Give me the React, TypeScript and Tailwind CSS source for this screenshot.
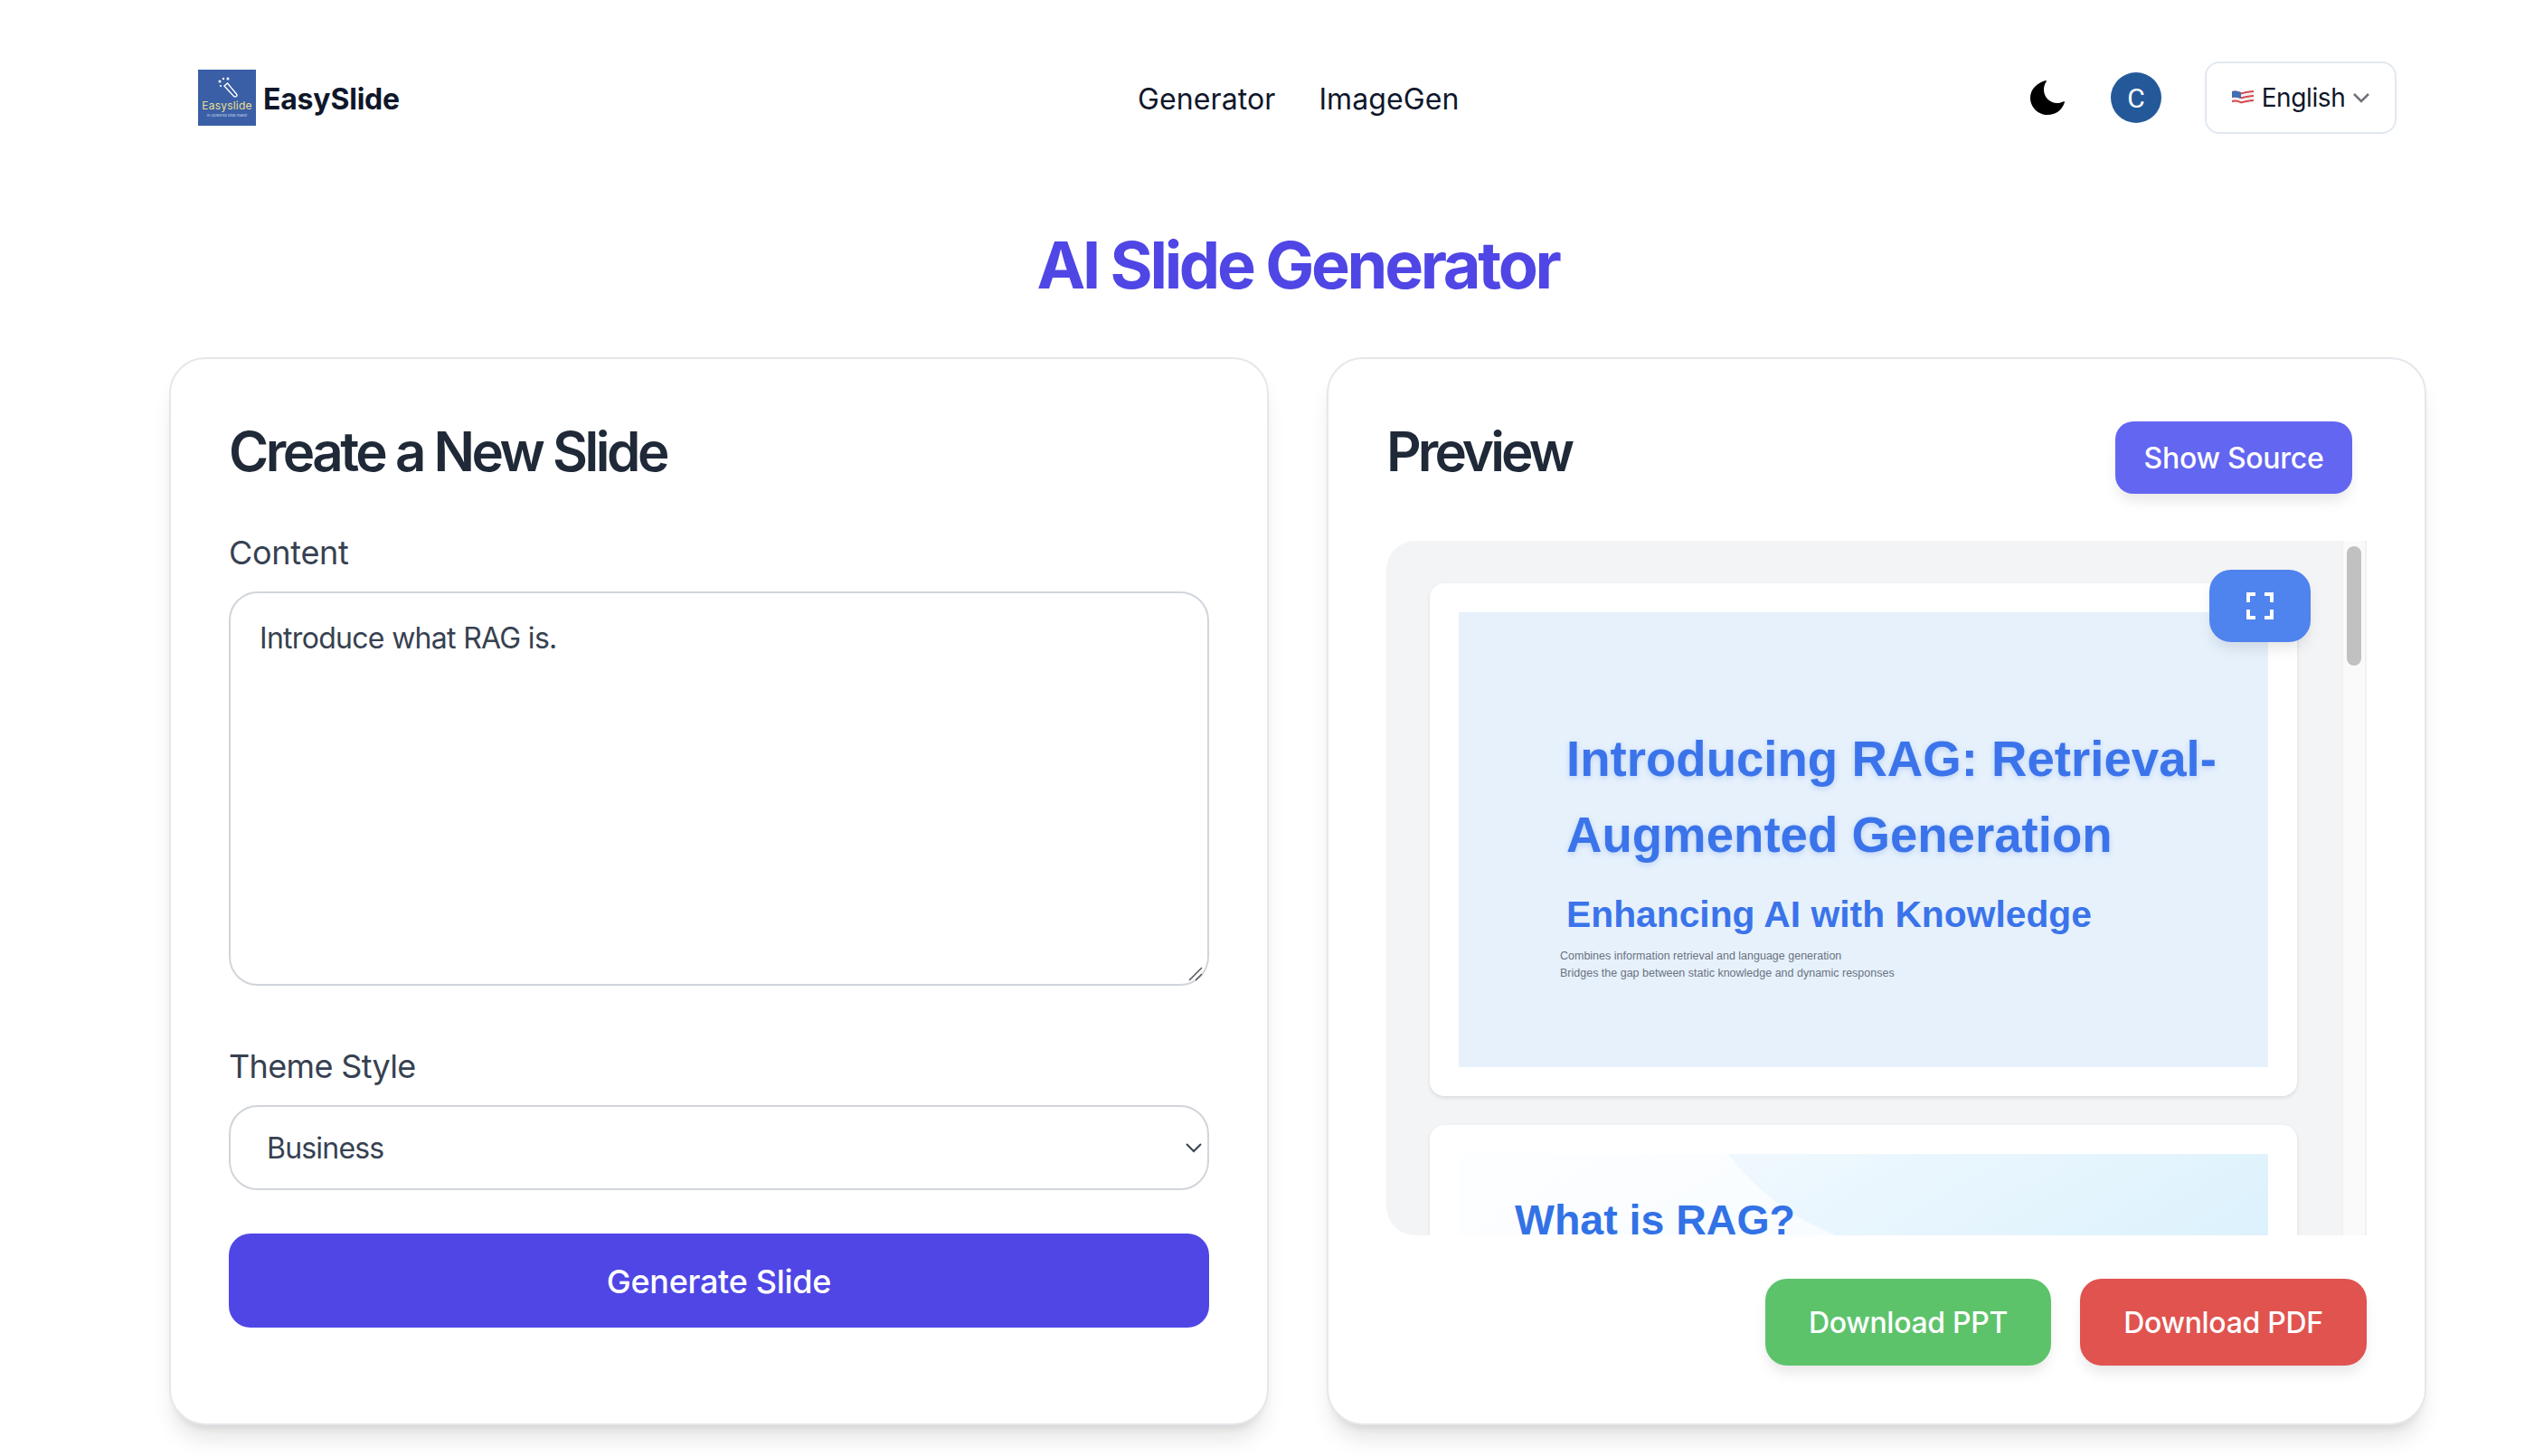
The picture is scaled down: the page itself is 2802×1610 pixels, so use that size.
import React from "react";

const inter = { fontFamily: "Inter, sans-serif" };

function Logo() {
  return (
    <div className="relative flex h-[62px] w-[64px] flex-col items-center overflow-hidden bg-[#3a5fa6]">
      <svg width="64" height="33" viewBox="0 0 64 33" fill="none" className="shrink-0">
        <path d="M29 18l3.500-3 10 12c1.500 2-1 4-3 2.500z" stroke="#fff" strokeWidth="1.400" />
        <circle cx="24" cy="13" r="1.500" fill="#fff" />
        <circle cx="28" cy="10" r="1.200" fill="#fff" />
        <circle cx="33" cy="10" r="1.500" fill="#fff" />
        <circle cx="25" cy="18" r="1.100" fill="#fff" />
      </svg>
      <span className="text-[12px] leading-[14px] tracking-[0.2px] text-[#eadf8c]" style={inter}>Easyslide</span>
      <span className="mt-[1px] whitespace-nowrap text-[4px] leading-[6px] text-[#c8d4ea]" style={inter}>AI-powered slide maker</span>
    </div>
  );
}

function Flag() {
  return (
    <svg width="26" height="20" viewBox="0 0 26 20">
      <path d="M1 3c6-2 9 2 12 1s8-2 12-2v13c-4 0-9 1-12 2s-6-3-12-1z" fill="#f2f2f2" />
      <path d="M1 3c6-2 9 2 12 1s8-2 12-2v2c-4 0-9 1-12 2S7 3 1 5zM1 8c6-2 9 2 12 1s8-2 12-2v2c-4 0-9 1-12 2S7 8 1 10zM1 13c6-2 9 2 12 1s8-2 12-2v2c-4 0-9 1-12 2s-6-3-12-1z" fill="#d9484c" />
      <path d="M1 3c4-1.400 7 .2 10 1v7c-3-.8-6-2-10-1z" fill="#3f6fb5" />
    </svg>
  );
}

function Header() {
  return (
    <header className="flex h-[216px] items-center pl-[219px] pr-[152px]">
      <div className="flex w-[1039px] items-center gap-[8px]">
        <Logo />
        <span className="pt-[3px] text-[32px] font-bold tracking-[-0.2px] text-[#0f172a]" style={inter}>EasySlide</span>
      </div>
      <nav className="flex gap-[48px] pt-[3px] text-[32px] tracking-[0.1px] text-[#0f172a]" style={inter}>
        <span>Generator</span>
        <span>ImageGen</span>
      </nav>
      <div className="ml-auto flex items-center">
        <svg width="40" height="40" viewBox="0 0 40 40" className="mr-[50px]">
          <path d="M17 1C9 3 0 10 0 20c0 11 9 19 19 19 9 0 16-5 19-14 .3-.8 0-1-.8-.8C35 25 32 26 30 26 21 26 15 19 15 11c0-3 .8-6 2.800-9 .2-.7-.2-1.200-.8-1z" fill="#000" transform="translate(1 0)" />
        </svg>
        <div className="mr-[48px] flex h-[56px] w-[56px] items-center justify-center rounded-full bg-[#245999] text-[30px] text-white" style={{ fontFamily: "Roboto, sans-serif" }}>C</div>
        <div className="flex h-[80px] w-[212px] items-center justify-center gap-[8px] rounded-[16px] border-2 border-[#e2e8f0] text-[28px] tracking-[-0.4px] text-[#0f172a]" style={inter}>
          <Flag />
          <span>English</span>
          <svg width="20" height="12" viewBox="0 0 20 12" fill="none"><path d="M2 2l8 8 8-8" stroke="#71717a" strokeWidth="2.500" /></svg>
        </div>
      </div>
    </header>
  );
}

function Card({ children }: { children: React.ReactNode }) {
  return (
    <section className="h-[1181px] w-[1216px] rounded-[40px] border-2 border-[#e5e7eb] bg-white px-[64px] pt-[66px] shadow-[0_20px_25px_-5px_rgba(0,0,0,0.1),0_8px_10px_-6px_rgba(0,0,0,0.1)]">
      {children}
    </section>
  );
}

function Slide1() {
  return (
    <div className="h-[503px] w-[895px] bg-[#e6f1fc] pl-[119px] pt-[121px]" style={{ fontFamily: '"Liberation Sans", sans-serif' }}>
      <h3 className="w-[760px] text-[54.600px] font-bold leading-[84px] text-[#3b74ea] [text-shadow:0_2px_6px_rgba(59,115,232,0.25)]">Introducing RAG: Retrieval-Augmented Generation</h3>
      <h4 className="mt-[20px] text-[40.800px] font-bold leading-[50px] text-[#3b74ea]">Enhancing AI with Knowledge</h4>
      <div className="-ml-[7px] mt-[12px] text-[12.500px] leading-[19px] text-[#6b7280]">
        <p>Combines information retrieval and language generation</p>
        <p>Bridges the gap between static knowledge and dynamic responses</p>
      </div>
    </div>
  );
}

function Slide2() {
  return (
    <div className="relative h-[503px] w-[895px] overflow-hidden bg-gradient-to-br from-[#f8fbff] to-[#c8ebfb] pl-[62px] pt-[43px]" style={{ fontFamily: '"Liberation Sans", sans-serif' }}>
      <svg className="absolute left-0 top-0" width="895" height="503" viewBox="0 0 895 503">
        <path d="M0 0h298c30 40 70 70 117 89C380 200 200 300 0 300z" fill="#fff" fillOpacity="0.7" />
      </svg>
      <h3 className="relative text-[46.500px] font-bold leading-[60px] text-[#3272e6]">What is RAG?</h3>
    </div>
  );
}

export default function App() {
  return (
    <div className="h-[1610px] overflow-hidden bg-white" style={inter}>
      <Header />
      <h1 className="ml-[187px] mr-[119px] h-[179px] pt-[34px] text-center text-[72px] font-bold leading-[86px] tracking-[-3.300px] text-[#4f46e5]">AI Slide Generator</h1>
      <main className="flex gap-[64px] pl-[187px] pr-[119px]">
        <Card>
          <h2 className="text-[60px] font-semibold leading-[72px] tracking-[-3.500px] text-[#1f2937]">Create a New Slide</h2>
          <label className="mt-[54px] block text-[36px] leading-[44px] tracking-[-0.3px] text-[#374151]">Content</label>
          <div className="relative mt-[21px] h-[436px] w-[1084px] rounded-[32px] border-2 border-[#d1d5db] px-[32px] py-[30px] text-[32px] leading-[40px] tracking-[-0.7px] text-[#374151]">
            Introduce what RAG is.
            <svg className="absolute bottom-[2px] right-[4px]" width="18" height="18" viewBox="0 0 18 18" fill="none"><path d="M2 16L16 2M9 16l7-7" stroke="#555" strokeWidth="1.500" /></svg>
          </div>
          <label className="mt-[67px] block text-[36px] leading-[44px] tracking-[-0.65px] text-[#374151]">Theme Style</label>
          <div className="mt-[21px] flex h-[94px] w-[1084px] items-center justify-between rounded-[32px] border-2 border-[#d1d5db] pl-[40px] pr-[5px] text-[32px] tracking-[-0.8px] text-[#374151]">
            <span className="pt-[1px]">Business</span>
            <svg width="20" height="12" viewBox="0 0 20 12" fill="none"><path d="M2 2l8 8 8-8" stroke="#374151" strokeWidth="2" /></svg>
          </div>
          <div className="mt-[48px] flex h-[104px] w-[1084px] items-center justify-center rounded-[24px] bg-[#4f46e5] pt-[2px] text-[36px] font-medium tracking-[-0.3px] text-white">Generate Slide</div>
        </Card>
        <Card>
          <div className="flex h-[72px] items-start justify-between pr-[16px]">
            <h2 className="text-[60px] font-semibold leading-[72px] tracking-[-3.900px] text-[#1f2937]">Preview</h2>
            <div className="mt-[3px] flex h-[80px] w-[262px] shrink-0 items-center justify-center rounded-[20px] bg-[#6366f1] pt-[2px] text-[32px] font-medium tracking-[-0.3px] text-white shadow-[0_10px_15px_-3px_rgba(0,0,0,0.1)]">Show Source</div>
          </div>
          <div className="relative mt-[63px] flex h-[768px]">
            <div className="flex h-full flex-1 flex-col gap-[32px] overflow-hidden rounded-l-[32px] bg-[#f3f4f6] pl-[48px] pr-[49px] pt-[47px]">
              <div className="rounded-[16px] bg-white p-[32px] shadow-[0_2px_4px_rgba(0,0,0,0.1)]"><Slide1 /></div>
              <div className="rounded-[16px] bg-white p-[32px] shadow-[0_2px_4px_rgba(0,0,0,0.1)]"><Slide2 /></div>
            </div>
            <div className="relative h-full w-[28px] border-x-2 border-[#f1f1f1] bg-[#fafafa]">
              <div className="absolute left-[4px] top-[6px] h-[132px] w-[16px] rounded-full bg-[#c1c1c1]" />
            </div>
            <div className="absolute left-[910px] top-[32px] flex h-[80px] w-[112px] items-center justify-center rounded-[24px] bg-[#4f83ee] shadow-[0_10px_15px_-3px_rgba(0,0,0,0.1)]">
              <svg width="30" height="30" viewBox="0 0 30 30" fill="none"><path d="M2 11V2h8M20 2h8v9M28 19v9h-8M10 28H2v-9" stroke="#fff" strokeWidth="4" /></svg>
            </div>
          </div>
          <div className="mt-[48px] flex justify-end gap-[32px]">
            <div className="flex h-[96px] w-[316px] items-center justify-center rounded-[24px] bg-[#5dc36b] pt-[2px] text-[32px] font-medium tracking-[-0.3px] text-white shadow-[0_10px_15px_-3px_rgba(0,0,0,0.1)]">Download PPT</div>
            <div className="flex h-[96px] w-[317px] items-center justify-center rounded-[24px] bg-[#e0534f] pt-[2px] text-[32px] font-medium tracking-[-0.3px] text-white shadow-[0_10px_15px_-3px_rgba(0,0,0,0.1)]">Download PDF</div>
          </div>
        </Card>
      </main>
    </div>
  );
}
